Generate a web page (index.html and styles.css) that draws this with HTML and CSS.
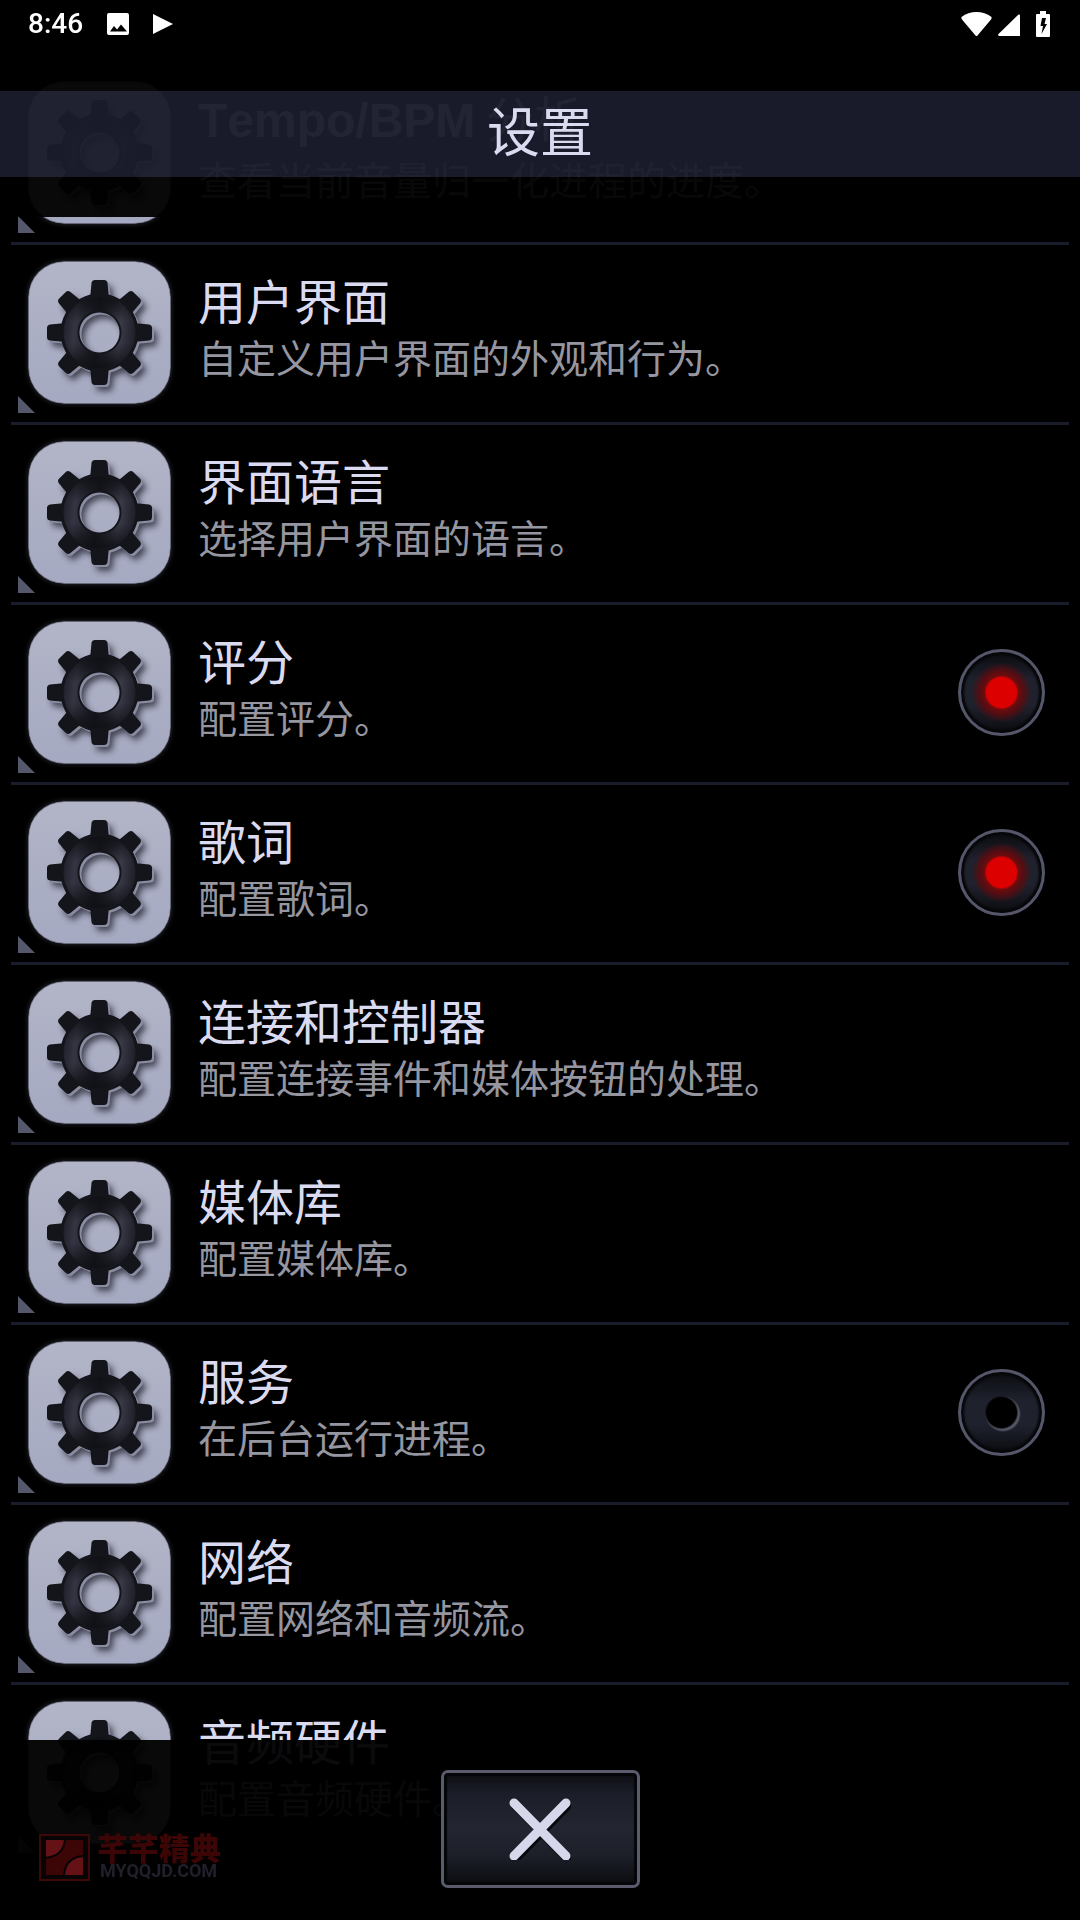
FILE: index.html
```html
<!DOCTYPE html>
<html lang="zh-CN">
<head>
    <meta charset="UTF-8">
    <meta name="viewport" content="width=device-width, initial-scale=1.0">
    <title>设置</title>
    <link rel="stylesheet" href="styles.css">
</head>
<body>
    <!-- shared gear tile -->
    <svg class="defs" aria-hidden="true">
        <defs>
            <linearGradient id="tileFill" x1="0" y1="0" x2="0" y2="1">
                <stop offset="0" stop-color="#b2b5c7"/>
                <stop offset="1" stop-color="#a5a9c1"/>
            </linearGradient>
            <linearGradient id="ringFill" x1="0" y1="0.2" x2="1" y2="0.3">
                <stop offset="0" stop-color="#1d1e28"/>
                <stop offset="0.18" stop-color="#343542"/>
                <stop offset="0.5" stop-color="#14151b"/>
                <stop offset="0.8" stop-color="#3a3b48"/>
                <stop offset="1" stop-color="#20212b"/>
            </linearGradient>
            <linearGradient id="ringShade" x1="0" y1="0" x2="0" y2="1">
                <stop offset="0" stop-color="#101116"/>
                <stop offset="0.35" stop-color="#101116" stop-opacity="0"/>
                <stop offset="0.65" stop-color="#101116" stop-opacity="0"/>
                <stop offset="1" stop-color="#101116"/>
            </linearGradient>
            <filter id="soft" x="-20%" y="-20%" width="140%" height="140%">
                <feGaussianBlur stdDeviation="3"/>
            </filter>
            <path id="tooth" d="M62 38 L63.500 22 Q64 19 67 19 H76 Q79 19 79.500 22 L81 38 Z"/>
            <g id="gearShape">
                <path fill-rule="evenodd" d="M71.500 32.500 a39 39 0 1 0 0.010 0 Z M71.500 51.500 a20 20 0 1 1 -0.010 0 Z"/>
                <use href="#tooth"/>
                <use href="#tooth" transform="rotate(45 71.500 71.500)"/>
                <use href="#tooth" transform="rotate(90 71.500 71.500)"/>
                <use href="#tooth" transform="rotate(135 71.500 71.500)"/>
                <use href="#tooth" transform="rotate(180 71.500 71.500)"/>
                <use href="#tooth" transform="rotate(225 71.500 71.500)"/>
                <use href="#tooth" transform="rotate(270 71.500 71.500)"/>
                <use href="#tooth" transform="rotate(315 71.500 71.500)"/>
            </g>
        </defs>
        <symbol id="gear" viewBox="0 0 143 143">
            <rect width="143" height="143" rx="36" fill="#666879"/>
            <rect x="1" y="1" width="141" height="141" rx="35" fill="url(#tileFill)"/>
            <use href="#gearShape" x="5" y="6" fill="#2a2b38" opacity="0.8" filter="url(#soft)"/>
            <use href="#gearShape" x="2" y="2" fill="#8a8da2"/>
            <use href="#gearShape" fill="#14151a"/>
            <path fill="url(#ringFill)" fill-rule="evenodd" d="M71.500 35.500 a36 36 0 1 0 0.010 0 Z M71.500 49.500 a22 22 0 1 1 -0.010 0 Z"/>
            <path fill="url(#ringShade)" fill-rule="evenodd" d="M71.500 35.500 a36 36 0 1 0 0.010 0 Z M71.500 49.500 a22 22 0 1 1 -0.010 0 Z"/>
        </symbol>
    </svg>

    <header class="header">
        <div class="status-bar">
            <div class="status-left">
                <span class="clock">8:46</span>
                <svg width="22" height="22" viewBox="0 0 22 22" aria-hidden="true">
                    <path fill="#fff" fill-rule="evenodd" d="M2 0h18a2 2 0 0 1 2 2v18a2 2 0 0 1-2 2H2a2 2 0 0 1-2-2V2a2 2 0 0 1 2-2Z M3 18.500h17l-6-7-4 5-3-3.500Z"/>
                </svg>
                <svg width="20" height="20" viewBox="0 0 20 20" aria-hidden="true">
                    <path fill="#fff" d="M0 0 20 10 0 20Z"/>
                </svg>
            </div>
            <div class="status-right">
                <svg width="31" height="26" viewBox="0 0 31 26" aria-hidden="true">
                    <path fill="#fff" d="M0.500 6Q7 1 15.500 1T30.500 6Q31 7 30 8.500L16.500 24.500Q15.500 25.500 14.500 24.500L1 8.500Q0 7 0.500 6Z"/>
                </svg>
                <svg class="signal" width="22" height="22" viewBox="0 0 22 22" aria-hidden="true">
                    <path fill="#fff" d="M20.500 0.500Q22 0 22 1.500V22H1Q-0.500 21.500 0.500 20Z"/>
                </svg>
                <svg width="14" height="26" viewBox="0 0 14 26" aria-hidden="true">
                    <path fill="#fff" fill-rule="evenodd" d="M4 0h6v3h3a1 1 0 0 1 1 1v21a1 1 0 0 1-1 1H1a1 1 0 0 1-1-1V4a1 1 0 0 1 1-1h3Z M6 7 4.500 15H7L5.500 23 11 13H8.500L10 7Z"/>
                </svg>
            </div>
        </div>
        <h1 class="page-title">设置</h1>
        <div class="header-fade"></div>
    </header>

    <main>
        <ul class="settings">
            <li class="row">
                <a class="row-link" href="#tempo">
                    <svg class="tile" aria-hidden="true"><use href="#gear"/></svg>
                    <span class="text">
                        <span class="title"><b>Tempo/BPM</b> 分析</span>
                        <span class="desc">查看当前音量归一化进程的进度。</span>
                    </span>
                </a>
            </li>
            <li class="row">
                <a class="row-link" href="#ui">
                    <svg class="tile" aria-hidden="true"><use href="#gear"/></svg>
                    <span class="text">
                        <span class="title">用户界面</span>
                        <span class="desc">自定义用户界面的外观和行为。</span>
                    </span>
                </a>
            </li>
            <li class="row">
                <a class="row-link" href="#language">
                    <svg class="tile" aria-hidden="true"><use href="#gear"/></svg>
                    <span class="text">
                        <span class="title">界面语言</span>
                        <span class="desc">选择用户界面的语言。</span>
                    </span>
                </a>
            </li>
            <li class="row">
                <a class="row-link" href="#rating">
                    <svg class="tile" aria-hidden="true"><use href="#gear"/></svg>
                    <span class="text">
                        <span class="title" id="rating-title">评分</span>
                        <span class="desc">配置评分。</span>
                    </span>
                </a>
                <input class="toggle" type="checkbox" aria-labelledby="rating-title" checked>
            </li>
            <li class="row">
                <a class="row-link" href="#lyrics">
                    <svg class="tile" aria-hidden="true"><use href="#gear"/></svg>
                    <span class="text">
                        <span class="title" id="lyrics-title">歌词</span>
                        <span class="desc">配置歌词。</span>
                    </span>
                </a>
                <input class="toggle" type="checkbox" aria-labelledby="lyrics-title" checked>
            </li>
            <li class="row">
                <a class="row-link" href="#connections">
                    <svg class="tile" aria-hidden="true"><use href="#gear"/></svg>
                    <span class="text">
                        <span class="title">连接和控制器</span>
                        <span class="desc">配置连接事件和媒体按钮的处理。</span>
                    </span>
                </a>
            </li>
            <li class="row">
                <a class="row-link" href="#library">
                    <svg class="tile" aria-hidden="true"><use href="#gear"/></svg>
                    <span class="text">
                        <span class="title">媒体库</span>
                        <span class="desc">配置媒体库。</span>
                    </span>
                </a>
            </li>
            <li class="row">
                <a class="row-link" href="#service">
                    <svg class="tile" aria-hidden="true"><use href="#gear"/></svg>
                    <span class="text">
                        <span class="title" id="service-title">服务</span>
                        <span class="desc">在后台运行进程。</span>
                    </span>
                </a>
                <input class="toggle" type="checkbox" aria-labelledby="service-title">
            </li>
            <li class="row">
                <a class="row-link" href="#network">
                    <svg class="tile" aria-hidden="true"><use href="#gear"/></svg>
                    <span class="text">
                        <span class="title">网络</span>
                        <span class="desc">配置网络和音频流。</span>
                    </span>
                </a>
            </li>
            <li class="row">
                <a class="row-link" href="#audio">
                    <svg class="tile" aria-hidden="true"><use href="#gear"/></svg>
                    <span class="text">
                        <span class="title">音频硬件</span>
                        <span class="desc">配置音频硬件。</span>
                    </span>
                </a>
            </li>
        </ul>
    </main>

    <footer class="footer">
        <div class="brand">
            <svg width="51" height="47" viewBox="0 0 51 47" aria-hidden="true">
                <rect x="1" y="1" width="49" height="45" fill="#080304" stroke="#3c0808" stroke-width="2"/>
                <rect x="7" y="6" width="37" height="35" fill="#3c0606"/>
                <path fill="#641216" stroke="#080304" stroke-width="2" d="M6 5H26Q25 22 6 24Z"/>
                <path fill="#641216" stroke="#080304" stroke-width="2" d="M45 42H25Q26 23 45 22Z"/>
            </svg>
            <div class="brand-text">
                <span class="brand-name">芊芊精典</span>
                <span class="brand-url">MYQQJD.COM</span>
            </div>
        </div>
        <button class="close" type="button" aria-label="关闭">
            <svg width="62" height="62" viewBox="0 0 62 62" aria-hidden="true">
                <path d="M6 6 57 58M57 6 6 58" transform="translate(1 2)" stroke="#08080c" stroke-width="9" stroke-linecap="round"/>
                <path d="M5 5 57 58M57 5 5 58" stroke="#d6d7ea" stroke-width="9" stroke-linecap="round"/>
            </svg>
        </button>
    </footer>
</body>
</html>
```

FILE: styles.css
```css
* {
    box-sizing: border-box;
}
body {
    margin: 0;
    background-color: #000;
    color: #dadbf0;
    font-family: "Noto Sans CJK SC", sans-serif;
}
.defs {
    position: absolute;
    width: 0;
    height: 0;
}

/* top bars, the list scrolls under them */
.header {
    position: fixed;
    top: 0;
    left: 0;
    right: 0;
    z-index: 2;
}
.status-bar {
    display: flex;
    justify-content: space-between;
    height: 91px;
    padding: 8px 30px 0 28px;
    background-color: rgba(0, 0, 0, 0.95);
}
.status-left,
.status-right {
    display: flex;
    align-items: center;
    height: 32px;
}
.status-left {
    gap: 24px;
}
.clock {
    color: #fff;
    font-family: Roboto, sans-serif;
    font-size: 28px;
    font-weight: 500;
    line-height: 34px;
}
.signal {
    margin: 2px 16px 0 6px;
}
.page-title {
    margin: 0;
    padding-bottom: 10px;
    background-color: rgba(26, 28, 44, 0.96);
    font-size: 53px;
    font-weight: 400;
    line-height: 76px;
    text-align: center;
}
.header-fade {
    height: 40px;
    background-color: rgba(0, 0, 0, 0.95);
}

.settings {
    margin: 0;
    padding: 65px 11px 0;
    list-style: none;
}
.row {
    position: relative;
    display: flex;
    align-items: center;
    padding: 16px 24px 18px 17px;
    border-bottom: 3px solid #1a1c2c;
}
.row:last-child {
    border-bottom: none;
}
/* corner mark */
.row::before {
    content: "";
    position: absolute;
    left: 7px;
    bottom: 9px;
    width: 17px;
    height: 17px;
    background-color: #55576a;
    clip-path: polygon(0 0, 100% 100%, 0 100%);
}
.row-link {
    display: flex;
    flex: 1;
    align-items: center;
    gap: 27px;
    color: inherit;
    text-decoration: none;
}
.tile {
    width: 143px;
    height: 143px;
    border-radius: 36px;
    box-shadow: 0 0 5px rgba(90, 92, 112, 0.5);
}
.text {
    display: flex;
    flex-direction: column;
    padding-bottom: 14px;
}
.title {
    font-size: 48px;
    line-height: 60px;
}
.title b {
    font-family: "Liberation Sans", sans-serif;
    font-kerning: none;
}
.desc {
    color: #9596a0;
    font-size: 39px;
    line-height: 54px;
}

.toggle {
    appearance: none;
    width: 87px;
    height: 87px;
    margin: 0;
    border: 3px solid #55566a;
    border-radius: 50%;
    background:
        radial-gradient(circle, #000 15px, transparent 17px),
        radial-gradient(circle at 42px 42px, #555766 16px, transparent 18px),
        linear-gradient(#0b0c10, #1f212d 35%, #1f212d 65%, #0b0c10);
    box-shadow: inset 0 0 2px 3px #060709;
    cursor: pointer;
}
.toggle:checked {
    background:
        radial-gradient(circle, #dc0000 15px, #6e0c0e 17px, #5a0c10 21px, rgba(80, 8, 12, 0) 30px),
        linear-gradient(#0b0c10, #1f212d 35%, #1f212d 65%, #0b0c10);
}

.footer {
    position: fixed;
    bottom: 0;
    left: 0;
    right: 0;
    z-index: 2;
    display: flex;
    justify-content: center;
    padding: 30px 0 32px;
    background-color: rgba(0, 0, 0, 0.95);
}
.close {
    display: flex;
    justify-content: center;
    align-items: center;
    width: 199px;
    height: 118px;
    padding: 0;
    border: 3px solid #5a5b6c;
    border-radius: 7px;
    background: linear-gradient(#0d0e12, #1c1e2a 20%, #232531 50%, #1c1e28 75%, #0b0c0f);
    box-shadow: inset 0 0 1px 3px #050608;
    cursor: pointer;
}
.brand {
    position: absolute;
    left: 39px;
    bottom: 39px;
    display: flex;
    align-items: center;
    gap: 7px;
}
.brand-text {
    display: flex;
    flex-direction: column;
}
.brand-name {
    color: #3c0606;
    font-size: 31px;
    font-weight: 900;
    line-height: 28px;
}
.brand-url {
    padding-left: 3px;
    color: #20202a;
    font-family: Roboto, sans-serif;
    font-size: 18px;
    font-weight: 700;
    line-height: 20px;
}
```
